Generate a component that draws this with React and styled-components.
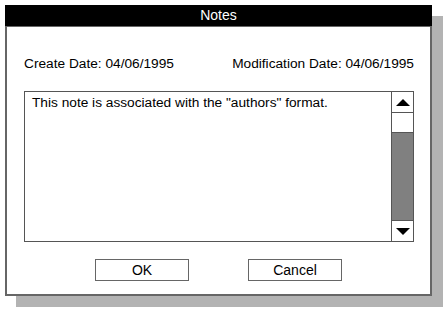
import React from 'react'
import styled, { createGlobalStyle } from 'styled-components'

const Global = createGlobalStyle`
    html, body {
        margin: 0;
        padding: 0;
        background: #ffffff;
    }
    body {
        font-family: "Liberation Sans", Arial, Helvetica, sans-serif;
        color: #000;
    }`

export default function App() {
    return (
        <Page>
            <Global />
            <Dialog>
                <TitleBar>Notes</TitleBar>
                <Body>
                    <Dates>
                        <span>Create Date: 04/06/1995</span>
                        <span>Modification Date: 04/06/1995</span>
                    </Dates>
                    <NoteBox>
                        <NoteText>This note is associated with the "authors" format.</NoteText>
                        <ScrollBar>
                            <ArrowButton>
                                <Arrow $dir="up" />
                            </ArrowButton>
                            <Thumb />
                            <Track />
                            <ArrowButton $last>
                                <Arrow $dir="down" />
                            </ArrowButton>
                        </ScrollBar>
                    </NoteBox>
                    <Buttons>
                        <Button>OK</Button>
                        <Button>Cancel</Button>
                    </Buttons>
                </Body>
            </Dialog>
        </Page>
    )
}

const Page = styled.div`
    width: 448px;
    height: 312px;
    padding: 5px 0 0 5px;
    box-sizing: border-box;`
const Dialog = styled.div`
    width: 427px;
    height: 291px;
    box-sizing: border-box;
    border: 2px solid #666;
    border-top: none;
    background: #fff;
    box-shadow: 11px 11px 0 #b3b3b3;
    display: flex;
    flex-direction: column;`
const TitleBar = styled.div`
    height: 21px;
    margin: 0 -2px;
    background: #000;
    color: #fff;
    font-size: 14px;
    line-height: 21px;
    text-align: center;
    border-bottom: 1px solid #666;`
const Body = styled.div`
    flex: 1;
    display: flex;
    flex-direction: column;
    padding: 29px 16px 0 17px;`
const Dates = styled.div`
    display: flex;
    justify-content: space-between;
    font-size: 13.7px;
    line-height: 16px;`
const NoteBox = styled.div`
    margin-top: 19px;
    height: 151px;
    box-sizing: border-box;
    border: 1px solid #555;
    display: flex;`
const NoteText = styled.div`
    flex: 1;
    padding: 3px 7px;
    font-size: 13.7px;
    line-height: 16px;`
const ScrollBar = styled.div`
    width: 21px;
    border-left: 1px solid #555;
    display: flex;
    flex-direction: column;`
const ArrowButton = styled.div`
    height: 20px;
    display: flex;
    align-items: center;
    justify-content: center;
    border-top: ${p => (p.$last ? '1px solid #555' : 'none')};
    border-bottom: ${p => (p.$last ? 'none' : '1px solid #555')};`
const Arrow = styled.div`
    width: 0;
    height: 0;
    border-left: 7px solid transparent;
    border-right: 7px solid transparent;
    border-bottom: ${p => (p.$dir === 'up' ? '7px solid #000' : 'none')};
    border-top: ${p => (p.$dir === 'down' ? '7px solid #000' : 'none')};`
const Thumb = styled.div`
    height: 19px;
    background: #fff;
    border-bottom: 1px solid #555;`
const Track = styled.div`
    flex: 1;
    background: #808080;`
const Buttons = styled.div`
    display: flex;
    justify-content: center;
    gap: 59px;
    margin-top: 17px;
    padding-right: 1px;`
const Button = styled.div`
    width: 94px;
    height: 22px;
    box-sizing: border-box;
    border: 1px solid #666;
    font-size: 14px;
    line-height: 20px;
    text-align: center;`
